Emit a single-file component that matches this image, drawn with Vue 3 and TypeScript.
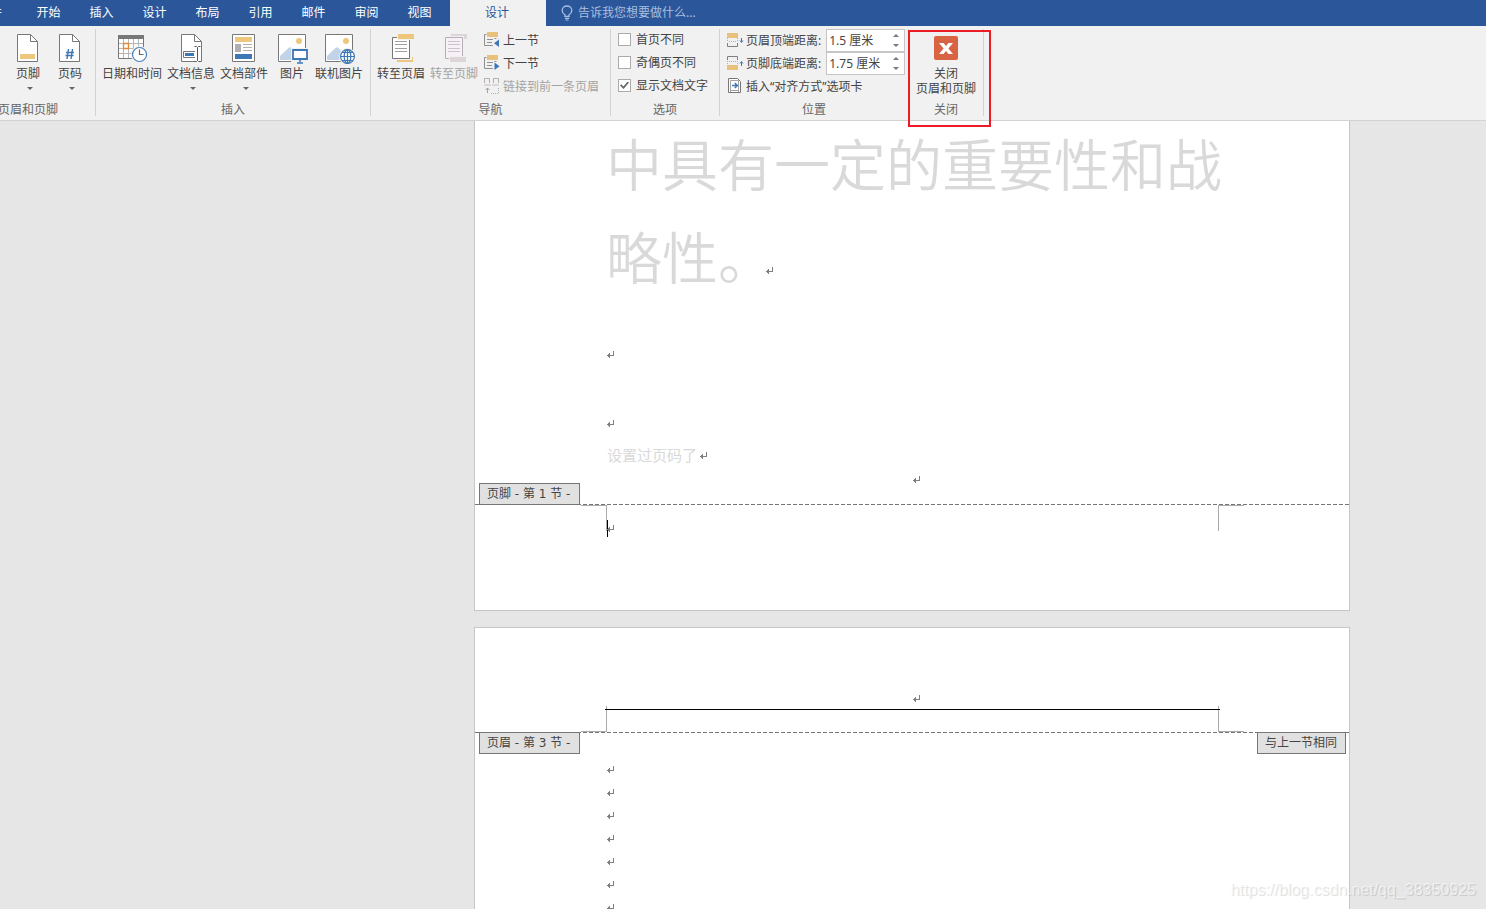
<script setup lang="ts">
import { ref } from 'vue'

const tabs: string[] = ['开始', '插入', '设计', '布局', '引用', '邮件', '审阅', '视图']

const options = ref([
  { id: 'first', label: '首页不同', checked: false },
  { id: 'oddeven', label: '奇偶页不同', checked: false },
  { id: 'showtext', label: '显示文档文字', checked: true },
])

const headerDistance = ref('1.5 厘米')
const footerDistance = ref('1.75 厘米')

const markPath = 'M6 0h1v5H0V4h6zM1 3h1v3H1zM2 2h1v5H2z'
const emptyLines = 7
</script>

<template>
  <div class="app">
    <nav class="tabs">
      <button class="tab file">文件</button>
      <button v-for="t in tabs" :key="t" class="tab">{{ t }}</button>
      <button class="tab active">设计</button>
      <button class="tell">
        <svg width="12" height="16" viewBox="0 0 12 16" fill="none" stroke="#a9bfe0">
          <path d="M4 11.5V9.8C2 8.6 1.2 7.3 1.2 5.4a4.8 4.4 0 0 1 9.6 0c0 1.900-.8 3.200-2.800 4.400v1.700z" stroke-width="1.300" />
          <path d="M4 13.500h4M4.500 15h3" />
        </svg>
        <span>告诉我您想要做什么...</span>
      </button>
    </nav>

    <header class="ribbon">
      <section class="group g-hf">
        <div class="body">
          <button class="big w42">
            <svg class="ico" viewBox="0 0 32 32">
              <path d="M5.500 2.500h13l7 7v20h-20z" fill="#fff" stroke="#777" />
              <path d="M18.500 2.500v7h7" fill="none" stroke="#777" />
              <path d="M8 22h15v5H8z" fill="#eec67d" />
            </svg>
            <span>页脚</span><i class="caret-down"></i>
          </button>
          <button class="big w42">
            <svg class="ico" viewBox="0 0 32 32">
              <path d="M5.500 2.500h13l7 7v20h-20z" fill="#fff" stroke="#777" />
              <path d="M18.500 2.500v7h7" fill="none" stroke="#777" />
              <path d="M14.500 17l-1.500 10M18.500 17L17 27M12 20.500h8M11.500 23.500h8" fill="none" stroke="#3e77b6" stroke-width="1.400" />
            </svg>
            <span>页码</span><i class="caret-down"></i>
          </button>
        </div>
        <h2 class="name">页眉和页脚</h2>
      </section>

      <section class="group g-insert">
        <div class="body">
          <button class="big w64">
            <svg class="ico" viewBox="0 0 32 32">
              <path d="M2.500 3.500h25v23h-25z" fill="#fff" stroke="#777" />
              <path d="M2 3h26v4H2z" fill="#777" />
              <path d="M7.500 7v19M12.500 7v19M17.500 7v19M22.500 7v19M3 11.500h24M3 16.500h24M3 21.500h24" stroke="#b5b5b5" fill="none" />
              <path d="M7.500 11.500h5v5h-5z" fill="#fff" stroke="#e08a3c" stroke-width="1.300" />
              <circle cx="23.500" cy="22.500" r="8.500" fill="#f1f1f1" />
              <circle cx="23.500" cy="22.500" r="7" fill="#fff" stroke="#4b81bd" stroke-width="1.200" />
              <path d="M23.500 17.500v5h4" fill="none" stroke="#666" stroke-width="1.200" />
            </svg>
            <span>日期和时间</span>
          </button>
          <button class="big w54">
            <svg class="ico" viewBox="0 0 32 32">
              <path d="M6.500 2.500h13l7 7v20h-20z" fill="#fff" stroke="#777" />
              <path d="M19.500 2.500v7h7" fill="none" stroke="#777" />
              <path d="M8.500 19.500h16v6h-16z" fill="#fff" stroke="#777" />
              <path d="M10 21h9v3h-9z" fill="#3e77b6" />
              <path d="M20 14h5v16h-5z" fill="#fff" />
              <path d="M19.500 14.500h2l1 1 1-1h2M22.500 15.500v13M19.500 29.500h2l1-1 1 1h2" fill="none" stroke="#555" />
            </svg>
            <span>文档信息</span><i class="caret-down"></i>
          </button>
          <button class="big w52">
            <svg class="ico" viewBox="0 0 32 32">
              <path d="M4.500 2.500h22v27h-22z" fill="#fff" stroke="#777" />
              <path d="M7 5h17v5H7z" fill="#eec67d" />
              <path d="M7 12h6v8H7z" fill="#b0b0b0" />
              <path d="M15 12.500h9M15 15.500h9M15 18.500h9" stroke="#b0b0b0" />
              <path d="M7 22h17v5H7z" fill="#3e77b6" />
            </svg>
            <span>文档部件</span><i class="caret-down"></i>
          </button>
          <button class="big w44">
            <svg class="ico" viewBox="0 0 32 32">
              <path d="M2.500 2.500h27v27h-27z" fill="#fff" stroke="#777" />
              <circle cx="23" cy="9" r="3" fill="#eec67d" />
              <path d="M4 28v-4l9-8.500h2L21 22v6z" fill="#c1d3e8" />
              <path d="M15 16h17v16H15z" fill="#f1f1f1" />
              <path d="M17 18h14v9H17z" fill="#fff" stroke="#3e77b6" stroke-width="1.800" />
              <path d="M24 28v2M21 31h6" stroke="#3e77b6" stroke-width="1.500" />
            </svg>
            <span>图片</span>
          </button>
          <button class="big w50">
            <svg class="ico" viewBox="0 0 32 32">
              <path d="M2.500 2.500h27v27h-27z" fill="#fff" stroke="#777" />
              <circle cx="23" cy="9" r="3" fill="#eec67d" />
              <path d="M4 28v-4l9-8.500h2L21 22v6z" fill="#c1d3e8" />
              <circle cx="24.500" cy="24.500" r="8.500" fill="#f1f1f1" />
              <g fill="none" stroke="#3e77b6" stroke-width="1.200">
                <circle cx="24.500" cy="24.500" r="6.900" fill="#fff" />
                <ellipse cx="24.500" cy="24.500" rx="3.300" ry="6.900" />
                <path d="M24.500 17.600v13.800M17.600 24.500h13.800M19 20.500h11M19 28.500h11" />
              </g>
            </svg>
            <span>联机图片</span>
          </button>
        </div>
        <h2 class="name">插入</h2>
      </section>

      <section class="group g-nav">
        <div class="body">
          <button class="big w52">
            <svg class="ico" viewBox="0 0 32 32">
              <path d="M12 25h16v5H12z" fill="#eec67d" />
              <path d="M6 4h21v24H6z" fill="#f1f1f1" />
              <path d="M7.500 5.500h17v21h-17z" fill="#fff" stroke="#777" />
              <path d="M10 9.500h12M10 12.500h12M10 16.500h12M10 19.500h12" stroke="#a0a0a0" />
              <path d="M12 1h18v7H12z" fill="#f1f1f1" />
              <path d="M13 2h16v5H13z" fill="#eec67d" />
            </svg>
            <span>转至页眉</span>
          </button>
          <button class="big w54" disabled>
            <svg class="ico" viewBox="0 0 32 32">
              <path d="M13 2h16v5H13z" fill="#dcd6d9" />
              <path d="M6 4h20v22H6z" fill="#f1f1f1" />
              <path d="M7.500 5.500h17v21h-17z" fill="#f7f0f7" stroke="#b5b0b3" />
              <path d="M10 9.500h12M10 12.500h12M10 16.500h12M10 19.500h12" stroke="#cbc5c9" />
              <path d="M11 24h18v7H11z" fill="#f1f1f1" />
              <path d="M12 25h16v5H12z" fill="#dcd6d9" />
            </svg>
            <span>转至页脚</span>
          </button>
          <div class="rows">
            <button class="row">
              <svg class="sico" viewBox="0 0 17 17">
                <path d="M2.500 2.500h-2v11H9M3 7.500h6M3 10.500h5M10.500 6.500h2" fill="none" stroke="#909090" />
                <path d="M3 0h11v5H3z" fill="#eac17c" />
                <path d="M15 7.500v7.500l-5-3.800z" fill="#3e77b6" />
              </svg>
              <span>上一节</span>
            </button>
            <button class="row">
              <svg class="sico" viewBox="0 0 17 17">
                <path d="M2.500 2.500h-2v11H9M3 7.500h6M3 10.500h5M10.500 6.500h2" fill="none" stroke="#909090" />
                <path d="M3 0h11v5H3z" fill="#eac17c" />
                <path d="M10.500 7.500v7.500l5-3.800z" fill="#3e77b6" />
              </svg>
              <span>下一节</span>
            </button>
            <button class="row" disabled>
              <svg class="sico" viewBox="0 0 17 17">
                <path d="M.5 5V.5h5V5M9.500 5V.5h5V5" fill="none" stroke="#b0b0b0" />
                <path d="M0 7h7M8 7h7" stroke="#dcd6d9" stroke-width="2" />
                <path d="M3.500 15v-5M1.500 12l2-2 2 2" fill="none" stroke="#a0a0a0" />
                <path d="M7 15.500h8M14.500 15V9" fill="none" stroke="#b0b0b0" stroke-dasharray="1 1" />
              </svg>
              <span>链接到前一条页眉</span>
            </button>
          </div>
        </div>
        <h2 class="name">导航</h2>
      </section>

      <section class="group g-opt">
        <div class="body">
          <div class="rows">
            <label v-for="o in options" :key="o.id" class="row check" :for="o.id">
              <input :id="o.id" v-model="o.checked" type="checkbox" />
              <span>{{ o.label }}</span>
            </label>
          </div>
        </div>
        <h2 class="name">选项</h2>
      </section>

      <section class="group g-pos">
        <div class="body">
          <div class="rows">
            <div class="row">
              <svg class="sico" viewBox="0 0 17 17">
                <path d="M0 1h11v5H0z" fill="#eac17c" />
                <path d="M.5 6v4M10.500 6v4M2 9.500h8" fill="none" stroke="#b0b0b0" stroke-dasharray="1 1" />
                <path d="M.5 11v3.500h10V11" fill="none" stroke="#808080" />
                <path d="M14.500 6v4M13 8.500l1.500 2 1.500-2" fill="none" stroke="#3e77b6" />
              </svg>
              <label for="hd">页眉顶端距离:</label>
              <span class="spin">
                <input id="hd" v-model="headerDistance" type="text" />
                <span class="arrows">
                  <button aria-label="增大页眉距离"><i class="up"></i></button>
                  <button aria-label="减小页眉距离"><i class="down"></i></button>
                </span>
              </span>
            </div>
            <div class="row">
              <svg class="sico" viewBox="0 0 17 17">
                <path d="M.5 5V1.500h10V5" fill="none" stroke="#808080" />
                <path d="M.5 6v4M10.500 6v4M2 6.500h8" fill="none" stroke="#b0b0b0" stroke-dasharray="1 1" />
                <path d="M0 10h11v5H0z" fill="#eac17c" />
                <path d="M14.500 11V7M13 8.500l1.500-2 1.500 2" fill="none" stroke="#3e77b6" />
              </svg>
              <label for="fd">页脚底端距离:</label>
              <span class="spin">
                <input id="fd" v-model="footerDistance" type="text" />
                <span class="arrows">
                  <button aria-label="增大页脚距离"><i class="up"></i></button>
                  <button aria-label="减小页脚距离"><i class="down"></i></button>
                </span>
              </span>
            </div>
            <button class="row">
              <svg class="sico" viewBox="0 0 17 17">
                <path d="M1.500.5h9l3 3v11h-12z" fill="#fff" stroke="#777" />
                <path d="M3.500 14V2.500h8V14M3.500 12.500h8" fill="none" stroke="#a5a5a5" />
                <path d="M5 7.500h5M7.800 5l2.500 2.500L7.800 10" fill="none" stroke="#3e77b6" stroke-width="1.500" />
              </svg>
              <span>插入“对齐方式”选项卡</span>
            </button>
          </div>
        </div>
        <h2 class="name">位置</h2>
      </section>

      <section class="group g-close">
        <div class="body">
          <button class="big w64">
            <svg class="ico" viewBox="0 0 32 32">
              <rect x="4" y="4" width="24" height="24" rx="2" fill="#d96443" />
              <path d="M9 11h4.500l2.500 3 2.500-3H23l-4.600 5.500L23 22h-4.500L16 19l-2.500 3H9l4.600-5.500z" fill="#fff" />
            </svg>
            <span>关闭<br />页眉和页脚</span>
          </button>
        </div>
        <h2 class="name">关闭</h2>
        <div class="highlight"></div>
      </section>
    </header>

    <main class="desk">
      <article class="sheet first">
        <div class="text">
          <p class="huge">中具有一定的重要性和战<br />略性。<svg class="mark after" viewBox="0 0 7 7"><path :d="markPath" /></svg></p>
          <p class="line"><svg class="mark" viewBox="0 0 7 7"><path :d="markPath" /></svg></p>
          <p class="line spaced"><svg class="mark" viewBox="0 0 7 7"><path :d="markPath" /></svg></p>
          <p class="line small"><span>设置过页码了</span><svg class="mark" viewBox="0 0 7 7"><path :d="markPath" /></svg></p>
          <p class="line centered"><svg class="mark" viewBox="0 0 7 7"><path :d="markPath" /></svg></p>
        </div>
        <footer class="foot">
          <div class="dash"></div>
          <span class="badge above">页脚 - 第 1 节 -</span>
          <div class="corners low"><i></i><i></i></div>
          <p class="line edit"><span class="cursor"></span><svg class="mark" viewBox="0 0 7 7"><path :d="markPath" /></svg></p>
        </footer>
      </article>

      <article class="sheet second">
        <header class="head">
          <p class="line centered"><svg class="mark" viewBox="0 0 7 7"><path :d="markPath" /></svg></p>
          <div class="rule"></div>
          <div class="corners high"><i></i><i></i></div>
        </header>
        <div class="under">
          <div class="dash"></div>
          <span class="badge">页眉 - 第 3 节 -</span>
          <span class="badge right">与上一节相同</span>
        </div>
        <div class="text lines">
          <p v-for="n in emptyLines" :key="n" class="line"><svg class="mark" viewBox="0 0 7 7"><path :d="markPath" /></svg></p>
        </div>
      </article>
    </main>
    <div class="watermark">https://blog.csdn.net/qq_38350925</div>
  </div>
</template>

<style>
body {
  margin: 0;
  background: #e6e6e6;
}
</style>

<style scoped>
.app {
  position: relative;
  display: flex;
  flex-direction: column;
  height: 100vh;
  overflow: hidden;
  background: #e6e6e6;
  color: #444;
  font-family: "Noto Sans", "Noto Sans CJK SC", sans-serif;
  font-size: 12px;
  line-height: 15px;
}
.app * {
  box-sizing: border-box;
}
button {
  border: 0;
  padding: 0;
  background: none;
  color: inherit;
  font: inherit;
  white-space: nowrap;
}
button:disabled {
  color: #a3a3a3;
}
p,
h2 {
  margin: 0;
  font-weight: normal;
}
.tabs {
  display: flex;
  flex: none;
  height: 26px;
  background: #2b579a;
  color: #fff;
}
.tab {
  width: 53px;
  padding-bottom: 2px;
}
.tab.file {
  display: flex;
  justify-content: flex-end;
  align-items: center;
  width: 2px;
  margin-right: 20px;
  overflow: hidden;
}
.tab.active {
  width: 96px;
  margin-left: 4px;
  padding-right: 2px;
  background: #f1f1f1;
  color: #2b579a;
}
.tell {
  display: flex;
  align-items: center;
  gap: 5px;
  margin-left: 15px;
  color: #a9bfe0;
}
.tell span {
  padding-bottom: 2px;
}
.ribbon {
  display: flex;
  flex: none;
  height: 95px;
  padding-top: 3px;
  border-bottom: 1px solid #d2d2d2;
  background: #f1f1f1;
}
.group {
  position: relative;
  display: flex;
  flex: none;
  flex-direction: column;
  height: 87px;
  border-right: 1px solid #d2d2d2;
}
.body {
  display: flex;
  flex: none;
  height: 73px;
}
.name {
  display: flex;
  justify-content: center;
  color: #666;
  font-size: 12px;
  line-height: 16px;
  white-space: nowrap;
}
.g-hf {
  width: 96px;
}
.g-hf .body {
  padding-left: 7px;
}
.g-hf .name {
  width: 56px;
}
.g-insert {
  width: 275px;
}
.g-nav {
  width: 240px;
}
.g-insert .body,
.g-nav .body {
  padding-left: 4px;
}
.g-opt {
  width: 109px;
}
.g-opt .body,
.g-pos .body {
  padding-left: 7px;
}
.g-pos {
  width: 189px;
}
.g-close {
  width: 75px;
}
.g-close .body {
  justify-content: center;
}
.big {
  display: flex;
  flex-direction: column;
  align-items: center;
  padding-top: 3px;
}
.w42 {
  width: 42px;
}
.w44 {
  width: 44px;
}
.w50 {
  width: 50px;
}
.w52 {
  width: 52px;
}
.w54 {
  width: 54px;
}
.w64 {
  width: 64px;
}
.ico {
  flex: none;
  width: 32px;
  height: 32px;
  margin-bottom: 2px;
}
.caret-down {
  margin-top: 6px;
  margin-left: 4px;
  border: 3px solid transparent;
  border-top-color: #666;
  border-bottom: 0;
}
.rows {
  display: flex;
  flex-direction: column;
}
.g-nav .rows {
  padding-left: 3px;
}
.row {
  display: flex;
  align-items: center;
  gap: 2px;
  height: 23px;
  white-space: nowrap;
}
.sico {
  flex: none;
  width: 17px;
  height: 17px;
}
.check {
  gap: 5px;
  padding-bottom: 2px;
}
.check input {
  appearance: none;
  display: grid;
  place-items: center;
  width: 13px;
  height: 13px;
  margin: 0;
  border: 1px solid #ababab;
  background: #fff;
}
.check input:checked::after {
  content: "";
  width: 9px;
  height: 8px;
  background: #666;
  clip-path: polygon(0 50%, 15% 35%, 38% 62%, 85% 0, 100% 12%, 40% 95%);
}
.spin {
  display: flex;
  width: 79px;
  height: 23px;
  margin-left: 3px;
  border: 1px solid #c6c6c6;
  background: #fff;
}
.spin input {
  flex: 1;
  min-width: 0;
  border: 0;
  padding: 0 0 0 2px;
  outline: 0;
  background: none;
  color: #444;
  font: inherit;
}
.arrows {
  display: flex;
  flex-direction: column;
  justify-content: center;
  gap: 1px;
  width: 16px;
}
.arrows button {
  display: flex;
  justify-content: center;
  align-items: center;
  height: 9px;
}
.up,
.down {
  border: 3px solid transparent;
}
.up {
  border-top: 0;
  border-bottom-color: #777;
}
.down {
  border-bottom: 0;
  border-top-color: #777;
}
.highlight {
  position: absolute;
  z-index: 2;
  left: -1px;
  right: -8px;
  top: 1px;
  height: 97px;
  border: 2px solid #ed1c24;
  pointer-events: none;
}
.desk {
  display: flex;
  flex: 1;
  flex-direction: column;
  gap: 16px;
  min-height: 0;
  padding: 0 136px 0 474px;
  overflow: hidden;
}
.sheet {
  flex: none;
  border: 1px solid #c6c6c6;
  background: #fff;
}
.first {
  height: 490px;
  border-top: 0;
}
.second {
  flex: 1 0 auto;
  border-bottom: 0;
}
.text {
  padding: 0 131px;
}
.first .text {
  display: flow-root;
  height: 383px;
}
.huge {
  margin: -6px 0 42px;
  color: #d9d9d9;
  font-family: "Noto Sans CJK SC", sans-serif;
  font-size: 56px;
  font-weight: 350;
  line-height: 93px;
  white-space: nowrap;
}
.line {
  display: flex;
  align-items: center;
  height: 23px;
  padding-left: 1px;
}
.spaced {
  margin-top: 46px;
}
.small {
  margin-top: 9px;
  color: #d9d9d9;
  font-size: 15px;
  white-space: nowrap;
}
.small span {
  margin-right: 3px;
}
.centered {
  justify-content: center;
  padding-left: 8px;
}
.small + .centered {
  margin-top: 1px;
}
.mark {
  flex: none;
  width: 7px;
  height: 7px;
  fill: #7f7f7f;
}
.after {
  margin-left: -8px;
  vertical-align: 5px;
}
.foot,
.under {
  position: relative;
}
.foot {
  height: 106px;
}
.dash {
  height: 1px;
  background: repeating-linear-gradient(90deg, #767676 0 4px, transparent 4px 6px);
}
.badge {
  position: absolute;
  left: 4px;
  top: 0;
  height: 22px;
  padding: 0 9px 0 7px;
  border: 1px solid #767676;
  background: #e1e1e1;
  font-family: "DejaVu Sans", "Noto Sans CJK SC", sans-serif;
  line-height: 20px;
  white-space: nowrap;
}
.badge.above {
  top: auto;
  bottom: 105px;
}
.badge.right {
  left: auto;
  right: 3px;
  padding-right: 8px;
}
.corners {
  display: flex;
  justify-content: space-between;
  height: 26px;
  padding: 0 105px 0 106px;
}
.corners i {
  width: 26px;
  border: 0 solid #ababab;
}
.low i {
  border-top-width: 1px;
}
.high i {
  border-bottom-width: 1px;
}
.corners i:first-child {
  border-right-width: 1px;
}
.corners i:last-child {
  border-left-width: 1px;
}
.edit {
  position: absolute;
  left: 131px;
  top: 13px;
}
.cursor {
  width: 1px;
  height: 17px;
  margin-right: -1px;
  background: #000;
}
.head {
  padding-top: 59px;
}
.rule {
  position: relative;
  height: 1px;
  margin: -1px 129px -4px 130px;
  background: #000;
}
.lines {
  padding-top: 25px;
}
.watermark {
  position: absolute;
  right: 10px;
  bottom: 10px;
  color: rgba(255, 255, 255, 0.6);
  font-family: "Liberation Sans", sans-serif;
  font-size: 16px;
  line-height: 18px;
  text-shadow: 1px 1px 1px rgba(0, 0, 0, 0.15);
}
</style>
